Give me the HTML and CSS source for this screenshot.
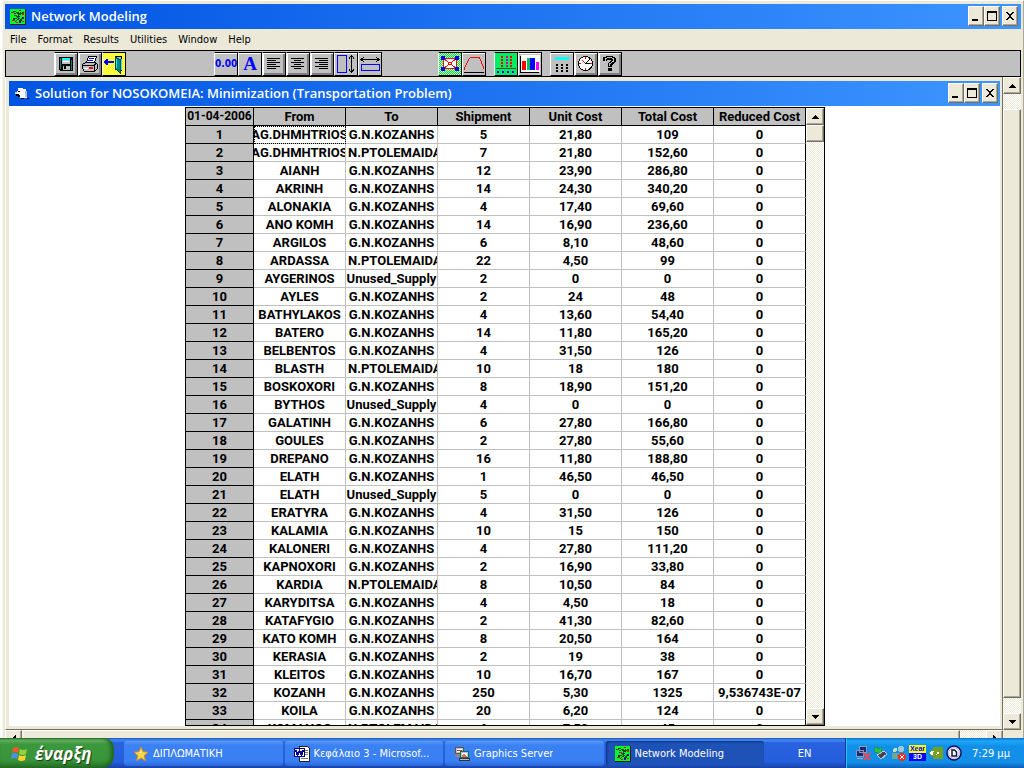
FILE: index.html
```html
<!DOCTYPE html>
<html lang="en">
<head>
<meta charset="utf-8">
<title>Network Modeling</title>
<link rel="stylesheet" href="styles.css">
</head>
<body>
<svg class="defs" aria-hidden="true">
  <symbol id="net" viewBox="0 0 16 16">
    <path fill="#00ff21" d="M0 0h16v16H0z"/><path fill="none" stroke="#222" d="M15.5 0v16M0 15.500h16"/>
    <path fill="none" stroke="#064b18" d="M1 4l4-2 5 4 4-3M2 12l4-3 4 3 3-4M4 6l5 3M8 3v5M5 13l4-4 4 4M11 3l-4 6"/>
    <path fill="#e01010" d="M2 3h2v1H2zM9 1h2v1H9zM12 4h2v2h-2zM2 11h3v1H2zM6 13h2v1H6zM12 12h2v1h-2zM5 6h2v1H5z"/>
    <path fill="#1010c0" d="M4 4h2v1H4zM8 7h2v1H8zM12 8h2v2h-2zM3 9h2v1H3zM9 12h2v2H9z"/>
  </symbol>
  <symbol id="min" viewBox="0 0 14 14"><path d="M3 10h6v2H3z"/></symbol>
  <symbol id="max" viewBox="0 0 14 14"><path fill-rule="evenodd" d="M2 2h10v10H2zM3 4v7h8V4z"/></symbol>
  <symbol id="close" viewBox="0 0 14 14"><path d="M3 3h2v1h1v1h2V4h1V3h2v1h-1v1H9v1H8v2h1v1h1v1h1v1H9v-1H8V9H6v1H5v1H3v-1h1V9h1V8h1V6H5V5H4V4H3z"/></symbol>
  <symbol id="up" viewBox="0 0 7 4"><path d="M3 0h1v1h1v1h1v1h1v1H0V3h1V2h1V1h1z"/></symbol>
  <symbol id="down" viewBox="0 0 7 4"><path d="M0 0h7v1H6v1H5v1H4v1H3V3H2V2H1V1H0z"/></symbol>
</svg>
<div class="desktop">
<main class="app">
  <header class="title">
    <svg class="i16" viewBox="0 0 16 16"><use href="#net"/></svg>
    <h1>Network Modeling</h1>
    <div class="controls">
      <button aria-label="Minimize"><svg><use href="#min"/></svg></button>
      <button aria-label="Maximize"><svg><use href="#max"/></svg></button>
      <button aria-label="Close"><svg><use href="#close"/></svg></button>
    </div>
  </header>
  <nav class="menu">
    <button>File</button><button>Format</button><button>Results</button><button>Utilities</button><button>Window</button><button>Help</button>
  </nav>
  <div class="toolbar">
    <div class="group">
      <button aria-label="Save"><svg viewBox="0 0 22 22"><path d="M4 4h14v14H5v-1H4z"/><path fill="#c0c0c0" d="M7 5h8v6H7zM8 13h7v4H8z"/><path fill="#0ff" d="M7 5h8v2H7z"/><path fill="#008080" d="M5 5h1v11H5zM16 7h1v10h-1z"/><path d="M9 13h2v3H9z"/><path stroke="#fff" d="M8 8.500h6"/></svg></button>
      <button aria-label="Print"><svg viewBox="0 0 22 22"><path fill="#fff" stroke="#000" d="M7.500 9.500l2-6h8l-2 6z"/><path stroke="#00f" d="M10 5.500h5M9 7.500h5"/><path fill="#c0c0c0" stroke="#000" d="M3.500 11.500l3-2h10l2 2v4l-3 3h-10l-2-3zM3 12.500h12v5M15 12l3-2"/><path fill="#f00" d="M10 14h4v2h-4z"/><path stroke="#fff" d="M5 15.500h4"/></svg></button>
      <button class="yellow" aria-label="Exit"><svg viewBox="0 0 22 22"><path fill="#00f" d="M1 8h1V7h1V6h2v2h6v2H5v2H3v-1H2v-1H1z"/><path fill="#c0c0c0" stroke="#000" d="M11.500 3.500h7v14"/><path fill="#008080" stroke="#004848" d="M12.500 4l5 3v13l-5-4z"/><path fill="#0ff" d="M13 6h1v9h-1zM18 6h1v11h-1z"/></svg></button>
    </div>
    <div class="group format">
      <button class="num flat">0.00</button>
      <button class="font flat">A</button>
      <button aria-label="Align left"><svg viewBox="0 0 22 22"><path stroke="#000" d="M4 5.500h13M4 7.500h9M4 9.500h13M4 11.500h9M4 13.500h13M4 15.500h9"/></svg></button>
      <button aria-label="Align center"><svg viewBox="0 0 22 22"><path stroke="#000" d="M4 5.500h13M7 7.500h7M4 9.500h13M7 11.500h7M4 13.500h13M7 15.500h7"/></svg></button>
      <button aria-label="Align right"><svg viewBox="0 0 22 22"><path stroke="#000" d="M4 5.500h13M8 7.500h9M4 9.500h13M8 11.500h9M4 13.500h13M8 15.500h9"/></svg></button>
      <button class="flat" aria-label="Row height"><svg viewBox="0 0 22 22"><path fill="none" stroke="#00f" d="M2.500 2.500h9v17h-9z"/><path stroke="#000" fill="none" d="M16.500 2v18M14 5.500l2.500-3 2.500 3M14 16.500l2.500 3 2.500-3"/></svg></button>
      <button class="flat" aria-label="Column width"><svg viewBox="0 0 22 22"><path fill="none" stroke="#00f" d="M2.500 11.500h18v6h-18z"/><path stroke="#000" fill="none" d="M2 6.500h18M5 4l-3 2.500 3 2.500M17 4l3 2.500-3 2.500"/></svg></button>
    </div>
    <div class="group network">
      <button class="green" aria-label="Network graph"><svg viewBox="0 0 22 22"><path fill="#fff" stroke="#f00" d="M4.500 5.500h13v10h-13z"/><path stroke="#f00" d="M4 5l14 11M18 5L4 16"/><path fill="#fff" stroke="#f00" d="M9.500 9.500h3v2h-3z"/><path fill="#00f" d="M2 3h4v4H2zM16 3h4v4h-4zM2 14h4v4H2zM16 14h4v4h-4z"/></svg></button>
      <button class="flat" aria-label="Curve"><svg viewBox="0 0 22 22"><path fill="none" stroke="#f00" d="M1 17l1-3 4-8 2-2h8l2 4 3 8"/><path stroke="#000" d="M1 19.500h20"/></svg></button>
    </div>
    <div class="group">
      <button class="teal" aria-label="Grid"><svg viewBox="0 0 22 22"><path stroke="#f00" stroke-width="2" stroke-dasharray="2 1" d="M7 3v11M16 3v11"/><path stroke="#c010a0" stroke-width="2" stroke-dasharray="2 1" d="M12 3v11"/><path stroke="#063" d="M1 15.500h20"/><path fill="#00f" d="M2 18h2v2H2zM7 18h2v2H7zM12 18h2v2h-2zM17 18h2v2h-2z"/></svg></button>
      <button class="flat" aria-label="Bar chart"><svg viewBox="0 0 22 22"><path fill="#fff" d="M2 2h19v17H2z"/><path fill="#f00" d="M3 8h4v9H3z"/><path fill="#00c060" d="M8 5h3v12H8z"/><path fill="#00f" d="M11 5h5v12h-5z"/><path fill="#f0f" d="M17 9h3v8h-3z"/><path fill="none" stroke="#000" d="M1.500 3v16.500H20"/></svg></button>
    </div>
    <div class="group">
      <button class="flat" aria-label="Calculator"><svg viewBox="0 0 22 22"><path fill="#0ff" d="M4 4h14v3H4z"/><path d="M5 11h2v2H5zM10 11h2v2h-2zM15 11h2v2h-2zM5 14h2v2H5zM10 14h2v2h-2zM15 14h2v2h-2zM5 17h2v2H5zM10 17h2v2h-2zM15 17h2v2h-2z"/></svg></button>
      <button aria-label="Clock"><svg viewBox="0 0 22 22"><circle cx="10.500" cy="10.500" r="7" fill="#fff" stroke="#000"/><path stroke="#000" d="M10 11l5-5M10 10.500h5"/><path stroke="#f00" d="M10.500 4v2M10.500 15v2M4 10.500h2M15 10.500h2M10 10l-3-3"/></svg></button>
      <button aria-label="Help"><svg viewBox="0 0 22 22"><path fill="none" stroke="#000" stroke-width="4" d="M6 8V6l2-1h5l2 1v2l-4 3v3M11 15v3"/><path fill="none" stroke="#c0c0c0" d="M6.500 8V6l2-1.500h4L14.500 6v2L10.500 11v2"/></svg></button>
    </div>
  </div>
  <div class="mdi">
    <section class="child">
      <header class="title">
        <svg class="i16" viewBox="0 0 16 16"><path fill="#fff" d="M4 2h5v1h3v2h1v7H6v-1H4V8H3V5h1z"/><path fill="#a8c0d0" d="M11 5h2v6h-2z"/><path d="M4 5h2v1H4zM2 8h3v1h1v2H4v-1H2zM7 12h3v1H7zM13 12h2v1h-2z"/><path fill="#c8d8e8" d="M1 6h2v2H1z"/></svg>
        <h2>Solution for NOSOKOMEIA: Minimization (Transportation Problem)</h2>
        <div class="controls">
          <button aria-label="Minimize"><svg><use href="#min"/></svg></button>
          <button aria-label="Maximize"><svg><use href="#max"/></svg></button>
          <button aria-label="Close"><svg><use href="#close"/></svg></button>
        </div>
      </header>
      <div class="sheet">
        <div class="grid">
          <div class="rows">
          <table>
            <thead><tr><th class="date">01-04-2006</th><th>From</th><th>To</th><th>Shipment</th><th>Unit Cost</th><th>Total Cost</th><th>Reduced Cost</th></tr></thead>
            <tbody>
            <tr><th>1</th><td class="focus"><span class="clip">AG.DHMHTRIOS</span></td><td>G.N.KOZANHS</td><td>5</td><td>21,80</td><td>109</td><td>0</td></tr>
            <tr><th>2</th><td><span class="clip">AG.DHMHTRIOS</span></td><td class="long">N.PTOLEMAIDA</td><td>7</td><td>21,80</td><td>152,60</td><td>0</td></tr>
            <tr><th>3</th><td>AIANH</td><td>G.N.KOZANHS</td><td>12</td><td>23,90</td><td>286,80</td><td>0</td></tr>
            <tr><th>4</th><td>AKRINH</td><td>G.N.KOZANHS</td><td>14</td><td>24,30</td><td>340,20</td><td>0</td></tr>
            <tr><th>5</th><td>ALONAKIA</td><td>G.N.KOZANHS</td><td>4</td><td>17,40</td><td>69,60</td><td>0</td></tr>
            <tr><th>6</th><td>ANO KOMH</td><td>G.N.KOZANHS</td><td>14</td><td>16,90</td><td>236,60</td><td>0</td></tr>
            <tr><th>7</th><td>ARGILOS</td><td>G.N.KOZANHS</td><td>6</td><td>8,10</td><td>48,60</td><td>0</td></tr>
            <tr><th>8</th><td>ARDASSA</td><td class="long">N.PTOLEMAIDA</td><td>22</td><td>4,50</td><td>99</td><td>0</td></tr>
            <tr><th>9</th><td>AYGERINOS</td><td>Unused_Supply</td><td>2</td><td>0</td><td>0</td><td>0</td></tr>
            <tr><th>10</th><td>AYLES</td><td>G.N.KOZANHS</td><td>2</td><td>24</td><td>48</td><td>0</td></tr>
            <tr><th>11</th><td>BATHYLAKOS</td><td>G.N.KOZANHS</td><td>4</td><td>13,60</td><td>54,40</td><td>0</td></tr>
            <tr><th>12</th><td>BATERO</td><td>G.N.KOZANHS</td><td>14</td><td>11,80</td><td>165,20</td><td>0</td></tr>
            <tr><th>13</th><td>BELBENTOS</td><td>G.N.KOZANHS</td><td>4</td><td>31,50</td><td>126</td><td>0</td></tr>
            <tr><th>14</th><td>BLASTH</td><td class="long">N.PTOLEMAIDA</td><td>10</td><td>18</td><td>180</td><td>0</td></tr>
            <tr><th>15</th><td>BOSKOXORI</td><td>G.N.KOZANHS</td><td>8</td><td>18,90</td><td>151,20</td><td>0</td></tr>
            <tr><th>16</th><td>BYTHOS</td><td>Unused_Supply</td><td>4</td><td>0</td><td>0</td><td>0</td></tr>
            <tr><th>17</th><td>GALATINH</td><td>G.N.KOZANHS</td><td>6</td><td>27,80</td><td>166,80</td><td>0</td></tr>
            <tr><th>18</th><td>GOULES</td><td>G.N.KOZANHS</td><td>2</td><td>27,80</td><td>55,60</td><td>0</td></tr>
            <tr><th>19</th><td>DREPANO</td><td>G.N.KOZANHS</td><td>16</td><td>11,80</td><td>188,80</td><td>0</td></tr>
            <tr><th>20</th><td>ELATH</td><td>G.N.KOZANHS</td><td>1</td><td>46,50</td><td>46,50</td><td>0</td></tr>
            <tr><th>21</th><td>ELATH</td><td>Unused_Supply</td><td>5</td><td>0</td><td>0</td><td>0</td></tr>
            <tr><th>22</th><td>ERATYRA</td><td>G.N.KOZANHS</td><td>4</td><td>31,50</td><td>126</td><td>0</td></tr>
            <tr><th>23</th><td>KALAMIA</td><td>G.N.KOZANHS</td><td>10</td><td>15</td><td>150</td><td>0</td></tr>
            <tr><th>24</th><td>KALONERI</td><td>G.N.KOZANHS</td><td>4</td><td>27,80</td><td>111,20</td><td>0</td></tr>
            <tr><th>25</th><td>KAPNOXORI</td><td>G.N.KOZANHS</td><td>2</td><td>16,90</td><td>33,80</td><td>0</td></tr>
            <tr><th>26</th><td>KARDIA</td><td class="long">N.PTOLEMAIDA</td><td>8</td><td>10,50</td><td>84</td><td>0</td></tr>
            <tr><th>27</th><td>KARYDITSA</td><td>G.N.KOZANHS</td><td>4</td><td>4,50</td><td>18</td><td>0</td></tr>
            <tr><th>28</th><td>KATAFYGIO</td><td>G.N.KOZANHS</td><td>2</td><td>41,30</td><td>82,60</td><td>0</td></tr>
            <tr><th>29</th><td>KATO KOMH</td><td>G.N.KOZANHS</td><td>8</td><td>20,50</td><td>164</td><td>0</td></tr>
            <tr><th>30</th><td>KERASIA</td><td>G.N.KOZANHS</td><td>2</td><td>19</td><td>38</td><td>0</td></tr>
            <tr><th>31</th><td>KLEITOS</td><td>G.N.KOZANHS</td><td>10</td><td>16,70</td><td>167</td><td>0</td></tr>
            <tr><th>32</th><td>KOZANH</td><td>G.N.KOZANHS</td><td>250</td><td>5,30</td><td>1325</td><td>9,536743E-07</td></tr>
            <tr><th>33</th><td>KOILA</td><td>G.N.KOZANHS</td><td>20</td><td>6,20</td><td>124</td><td>0</td></tr>
            <tr><th>34</th><td>KOMANOS</td><td class="long">N.PTOLEMAIDA</td><td>6</td><td>7,50</td><td>45</td><td>0</td></tr>
            </tbody>
          </table>
          </div>
          <div class="vscroll">
            <button aria-label="Scroll up"><svg class="arrow"><use href="#up"/></svg></button>
            <div class="thumb small"></div>
            <div class="track"></div>
            <button aria-label="Scroll down"><svg class="arrow"><use href="#down"/></svg></button>
          </div>
        </div>
      </div>
    </section>
    <div class="vscroll outer">
      <button aria-label="Scroll up"><svg class="arrow"><use href="#up"/></svg></button>
      <div class="gap"></div>
      <div class="thumb tall"></div>
      <div class="gap"></div>
      <button aria-label="Scroll down"><svg class="arrow"><use href="#down"/></svg></button>
    </div>
  </div>
  <div class="hscroll">
    <button aria-label="Scroll left"><svg viewBox="0 0 4 7"><path d="M4 0v7H3V6H2V5H1V4H0V3h1V2h1V1h1V0z"/></svg></button>
    <div class="thumb"></div>
    <div class="gap"></div>
    <button aria-label="Scroll right"><svg viewBox="0 0 4 7"><path d="M0 0v7h1V6h1V5h1V4h1V3H3V2H2V1H1V0z"/></svg></button>
    <div class="corner"></div>
  </div>
</main>
<footer class="taskbar">
  <button class="start"><svg viewBox="0 0 18 18"><path fill="#f05a28" d="M2 4q3-2 6 0L7 9q-3-2-6 0z"/><path fill="#8fd63c" d="M9 5q3 2 7 0l-1 5q-3 2-7 0z"/><path fill="#4a90f0" d="M1 10q3-2 6 0l-1 5q-3-2-6 0z"/><path fill="#fdd22a" d="M8 11q3 2 7 0l-1 5q-4 2-7 0z"/></svg>έναρξη</button>
  <div class="tasks">
    <button><svg class="i16 smooth" viewBox="0 0 16 16"><path fill="#ffd84a" stroke="#e08a10" d="M8 1l2 4.700 5 .5-3.800 3.400 1.200 5L8 12l-4.400 2.600 1.200-5L1 6.200l5-.5z"/><path fill="#fff4a8" d="M8 4l1 3H6z"/></svg><span>ΔΙΠΛΩΜΑΤΙΚΗ</span></button>
    <button><svg class="i16" viewBox="0 0 16 16"><path fill="#fff" stroke="#222" d="M5.500.5h8l2 2v13h-10z"/><path stroke="#777" d="M11 4.500h3M11 6.500h3M11 8.500h3M7 12.500h7"/><path fill="#fff" stroke="#00007a" d="M.5 2.500h10v8H.5z"/><path fill="none" stroke="#00009a" stroke-width="2" d="M2 4l1.500 5 2-4 2 4L9 4"/></svg><span>Κεφάλαιο 3 - Microsof...</span></button>
    <button><svg class="i16" viewBox="0 0 16 16"><path fill="#c0c0c0" stroke="#555" d="M1.500 1.500h8v6h-8z"/><path fill="#fff" d="M3 3h5v3H3z"/><path stroke="#c03030" d="M3 5l2-1 3 1"/><path fill="#888" d="M1 8h5v3H1z"/><path fill="#c0c0c0" stroke="#075" d="M6.500 5.500h8v6h-8z"/><path fill="#fff" d="M8 7h5v4H8z"/><path fill="#f66" d="M8 9l2-1 3 2v1H8z"/><path fill="#bbb" stroke="#333" d="M5.500 12.500h10v2h-10z"/></svg><span>Graphics Server</span></button>
    <button class="active"><svg class="i16" viewBox="0 0 16 16"><use href="#net"/></svg><span>Network Modeling</span></button>
  </div>
  <button class="lang">EN</button>
  <div class="tray">
    <svg class="i16" viewBox="0 0 16 16"><path fill="#1a2a6a" stroke="#8a98c8" d="M4.500 1.500h7v6h-7zM1.500 5.500h7v6h-7z"/><path stroke="#aab" d="M2 13.500h6"/><path stroke="#f04848" stroke-width="2" d="M9 8l6 7M15 8l-6 7"/></svg>
    <svg class="i16" viewBox="0 0 16 16"><path fill="#445" stroke="#ccd" d="M4 10l7-4 3 3-6 5z"/><path fill="#30c040" stroke="#085" stroke-width=".5" d="M1 3l3-1 1 2 3-2 1 4-4 3-1-2-2 1z"/></svg>
    <svg class="i16" viewBox="0 0 16 16"><circle cx="10" cy="4" r="3" fill="#9cc8d8"/><path fill="#5a98b0" d="M6 8h8l1 6H5z"/><circle cx="4" cy="5" r="2" fill="#bfe0c0"/><path fill="#70a890" d="M1 8h5v6H1z"/><circle cx="11" cy="12" r="4" fill="#e83020"/><path stroke="#fff" d="M9 10l4 4M13 10l-4 4"/></svg>
    <span class="xear"><b>Xear</b><b>3D</b></span>
    <svg class="i16" viewBox="0 0 16 16"><path fill="#76a020" d="M5 2h10v12H5z"/><path fill="#fff" stroke="#76a020" d="M1 8q5-6 11 0-6 6-11 0z"/><circle cx="7" cy="8" r="2" fill="#76a020"/></svg>
    <svg class="i16 smooth" viewBox="0 0 16 16"><circle cx="8" cy="8" r="7" fill="#fff" stroke="#101060" stroke-width="1.500"/><circle cx="8" cy="8" r="5.300" fill="none" stroke="#a8a8d8"/><path fill="none" stroke="#101040" stroke-width="1.500" d="M6 5h2.500l2 2v4H6z"/></svg>
    <time>7:29 μμ</time>
  </div>
</footer>
</div>
</body>
</html>
```
FILE: styles.css
```css
* { box-sizing: border-box; }
body { margin: 0; font-family: "DejaVu Sans Condensed", "Noto Sans", sans-serif; font-size: 11px; color: #000; }
button { font: inherit; color: inherit; margin: 0; padding: 0; border: 0; background: none; }
svg { display: block; flex: none; shape-rendering: crispEdges; }
.defs { position: absolute; width: 0; height: 0; }
.i16 { width: 16px; height: 16px; }
.smooth { shape-rendering: auto; }

.desktop { height: 100vh; display: flex; flex-direction: column; overflow: hidden; background: #fff; }
.app { flex: 1; min-height: 0; display: flex; flex-direction: column; margin-left: 2px; padding: 3px 2px 0 2px; background: #ece9d8; border-left: 1px solid #f8f7f0; border-right: 1px solid #aca899; border-top: 1px solid #fff; }

.title { display: flex; align-items: center; height: 25px; padding: 0 3px 0 5px; gap: 5px; color: #fff; background: linear-gradient(90deg, #0054e3, #3d95ff); flex: none; }
.title h1, .title h2 { flex: 1; margin: 0; padding-bottom: 1px; font: 600 13px/18px "Open Sans", sans-serif; white-space: nowrap; }
.controls { display: flex; padding-bottom: 1px; }
.controls button { width: 16px; height: 20px; display: grid; place-items: center; color: #000; background: #ece9d8; border: 1px solid; border-color: #fff #716f64 #716f64 #fff; box-shadow: inset -1px -1px #aca899; }
.controls button:last-child { margin-left: 2px; }
.controls svg { width: 14px; height: 14px; }

.menu { display: flex; height: 21px; padding-left: 5px; gap: 11px; align-items: center; flex: none; }

.toolbar { display: flex; flex: none; height: 27px; padding: 0 0 0 48px; border: 1px solid #000; background: #c0c0c0; gap: 8px; align-items: center; }
.group { display: flex; }
.group.format { margin-left: 80px; }
.group.network { margin-left: 48px; }
.group button { width: 24px; height: 24px; display: grid; place-items: center; background: #c0c0c0; border: 1px solid; border-color: #000 #000 #000 #fff; box-shadow: inset 1px 1px #fff, inset -2px -2px #808080; overflow: hidden; }
.group button.flat { box-shadow: inset 0 1px #fff; }
.group svg { width: 22px; height: 22px; }
.group button.yellow { background: repeating-conic-gradient(#ff0 0 25%, #ffff70 0 50%) 0 0 / 2px 2px; box-shadow: none; }
.group button.green { background: repeating-conic-gradient(#00e030 0 25%, #d0ffd0 0 50%) 0 0 / 2px 2px; box-shadow: none; }
.group button.teal { background: repeating-conic-gradient(#00ff20 0 25%, #00e0a0 0 50%) 0 0 / 2px 2px; box-shadow: none; }
.group button.num { color: #00f; font: bold 10px "DejaVu Sans Condensed", sans-serif; }
.group button.font { color: #00f; font: bold 19px "Liberation Serif", serif; }

.mdi { flex: 1; min-height: 0; display: flex; }
.child { flex: 1; min-width: 0; display: flex; flex-direction: column; padding: 4px 2px 0 3px; border-left: 1px solid #fff; border-right: 1px solid #716f64; border-bottom: 1px solid #716f64; }
.child .title { padding-right: 2px; }
.sheet { flex: 1; min-height: 0; display: flex; justify-content: center; padding: 1px 0 0 1px; background: #fff; margin-bottom: 3px; }
.grid { display: flex; border: 1px solid #000; overflow: hidden; }
.rows { overflow: hidden; }

table { width: 620px; table-layout: fixed; border-collapse: separate; border-spacing: 0; font: bold 13px/17px Roboto, sans-serif; text-align: center; }
th, td { height: 18px; padding: 0; overflow: hidden; white-space: nowrap; border-right: 1px solid #c0c0c0; border-bottom: 1px solid #c0c0c0; }
th { background: #c0c0c0; border-color: #000; font-weight: bold; }
th:first-child { width: 68px; }
th:last-child, td:last-child { border-right-color: #000; }
.date { font: bold 12px/17px Roboto, sans-serif; }
.clip { display: flex; justify-content: center; overflow: hidden; }
.focus { outline: 1px dotted #000; outline-offset: -1px; }
.long { text-align: left; padding-left: 2px; }

.vscroll { width: 18px; display: flex; flex-direction: column; flex: none; background: repeating-conic-gradient(#ece9d8 0 25%, #fff 0 50%) 0 0 / 2px 2px; }
.vscroll button, .thumb, .hscroll button { background: #ece9d8; border: 1px solid; border-color: #fff #716f64 #716f64 #fff; box-shadow: inset -1px -1px #aca899; }
.vscroll button { height: 17px; flex: none; display: grid; place-items: center; }
.arrow { width: 7px; height: 4px; }
.thumb.small { height: 17px; }
.track { flex: 1; }
.thumb.tall { flex: 1; }
.outer .gap { height: 15px; }

.hscroll { height: 8px; overflow: hidden; display: flex; flex: none; background: repeating-conic-gradient(#ece9d8 0 25%, #fff 0 50%) 0 0 / 2px 2px; }
.hscroll > * { height: 17px; flex: none; }
.hscroll button { width: 17px; display: grid; place-items: center; }
.hscroll svg { width: 4px; height: 7px; }
.hscroll .thumb { flex: 1; }
.hscroll .gap { width: 26px; }
.hscroll .corner { width: 18px; background: #ece9d8; }

.taskbar { height: 30px; flex: none; display: flex; color: #fff; background: linear-gradient(#1f4fb8 0, #3f8cf3 2px, #2862de 5px, #245edc 24px, #1941a5 30px); }
.start { width: 114px; display: flex; align-items: center; gap: 6px; padding-left: 11px; border-radius: 0 10px 12px 0; background: linear-gradient(#2f7a2f 0, #6cb86c 2px, #3c983c 6px, #3a953a 22px, #266f26 30px); box-shadow: inset -3px 0 4px #1f5f1f; }
button.start { font: italic bold 17px "Open Sans", sans-serif; text-shadow: 1px 1px 1px #133d13; }
.start svg { width: 18px; height: 18px; shape-rendering: auto; }
.tasks { flex: 1; max-width: 640px; display: flex; gap: 2px; margin-left: 10px; padding: 3px 0 2px; }
.tasks button { flex: 1; min-width: 0; display: flex; align-items: center; gap: 4px; padding-left: 9px; border-radius: 3px; background: linear-gradient(#5a9bf8 0, #3c81f3 4px, #3980f4 20px, #2c66d8 25px); }
.tasks button.active { background: #1e52b7; box-shadow: inset 1px 1px 2px #0d2f78; }
.tasks span { overflow: hidden; white-space: nowrap; }
.lang { margin: 0 auto; }
.tray { width: 179px; display: flex; align-items: center; gap: 2px; padding-left: 9px; border-left: 1px solid #0a3a9a; box-shadow: inset 1px 0 #30c0ff; background: linear-gradient(#0e6fd0 0, #1ea8f6 3px, #1290e9 8px, #1290e9 24px, #0d5fb8 30px); }
.xear { display: flex; flex-direction: column; width: 17px; }
.xear b { display: block; height: 8px; font: bold 7px/8px "Liberation Sans", sans-serif; text-align: center; background: #ff0; color: #00f; }
.xear b + b { background: #00f; color: #fff; }
.tray time { margin-left: 8px; }
```
